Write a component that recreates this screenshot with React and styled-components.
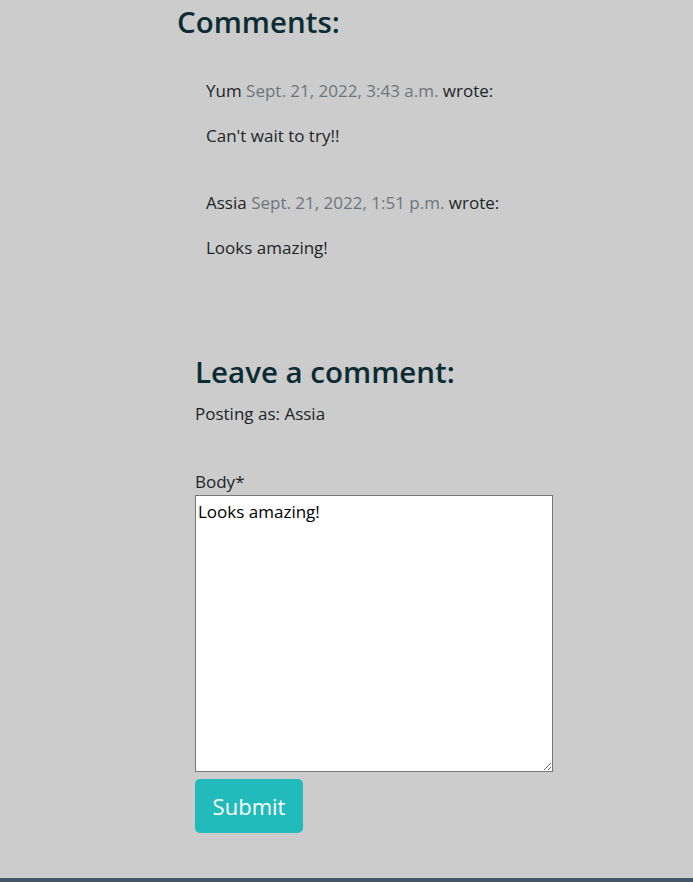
import React, { useState } from 'react';
import styled, { createGlobalStyle } from 'styled-components';

const GlobalStyle = createGlobalStyle`
  body {
    margin: 0;
    background-color: #cccccc;
    font-family: "Open Sans", "Noto Sans", sans-serif;
    color: #212529;
  }
`

const Page = styled.div`
  min-height: 878px;
  display: flex;
  flex-direction: column;
`

const Main = styled.main`
  flex: 1;
`

const CommentsSection = styled.section`
  margin-left: 177px;
`

const Heading = styled.h3`
  margin: 0;
  padding-top: ${({ $offset }) => $offset || 0}px;
  font-size: 29.5px;
  font-weight: 600;
  line-height: 38px;
  color: #0b2c33;
`

const CommentList = styled.div`
  padding-left: 29px;
  padding-top: 36px;
`

const CommentCard = styled.div`
  margin-bottom: 40px;
`

const Meta = styled.p`
  margin: 0 0 18px;
  font-size: 17px;
  line-height: 27px;
`

const Date = styled.span`
  color: #6c757d;
`

const Body = styled.p`
  margin: 0;
  font-size: 17px;
  line-height: 27px;
`

const FormSection = styled.section`
  margin-left: 195px;
  margin-top: 92px;
`

const PostingAs = styled.p`
  margin: 9px 0 41px;
  font-size: 17px;
  line-height: 27px;
`

const Label = styled.label`
  display: block;
  font-size: 17px;
  line-height: 27px;
`

const TextArea = styled.textarea`
  display: block;
  box-sizing: border-box;
  width: 358px;
  height: 277px;
  margin: 0;
  padding: 5px 2px 2px;
  border: 1px solid #767676;
  background: #fff;
  font-family: "Open Sans", "Noto Sans", sans-serif;
  font-size: 17px;
  line-height: 22px;
  color: #000;
  resize: both;
`

const SubmitButton = styled.button`
  margin-top: 7px;
  width: 108px;
  height: 54px;
  border: none;
  border-radius: 5px;
  background-color: #22bbbb;
  color: #fff;
  font-family: "Open Sans", "Noto Sans", sans-serif;
  font-size: 22px;
  cursor: pointer;
`

const Footer = styled.footer`
  height: 40px;
  margin-top: 45px;
  background-color: #445566;
`

const comments = [
  { name: 'Yum', date: 'Sept. 21, 2022, 3:43 a.m.', body: "Can't wait to try!!" },
  { name: 'Assia', date: 'Sept. 21, 2022, 1:51 p.m.', body: 'Looks amazing!' },
]

const App = () => {
  const [text, setText] = useState('Looks amazing!');

  return (
    <Page>
      <GlobalStyle />
      <Main>
        <CommentsSection>
          <Heading $offset={3}>Comments:</Heading>
          <CommentList>
            {comments.map((c) => (
              <CommentCard key={c.name}>
                <Meta>{c.name} <Date>{c.date}</Date> wrote:</Meta>
                <Body>{c.body}</Body>
              </CommentCard>
            ))}
          </CommentList>
        </CommentsSection>
        <FormSection>
          <Heading>Leave a comment:</Heading>
          <PostingAs>Posting as: Assia</PostingAs>
          <form onSubmit={(e) => e.preventDefault()}>
            <Label htmlFor="body">Body*</Label>
            <TextArea id="body" value={text} onChange={(e) => setText(e.target.value)} />
            <SubmitButton type="submit">Submit</SubmitButton>
          </form>
        </FormSection>
      </Main>
      <Footer />
    </Page>
  )
}

export default App;
